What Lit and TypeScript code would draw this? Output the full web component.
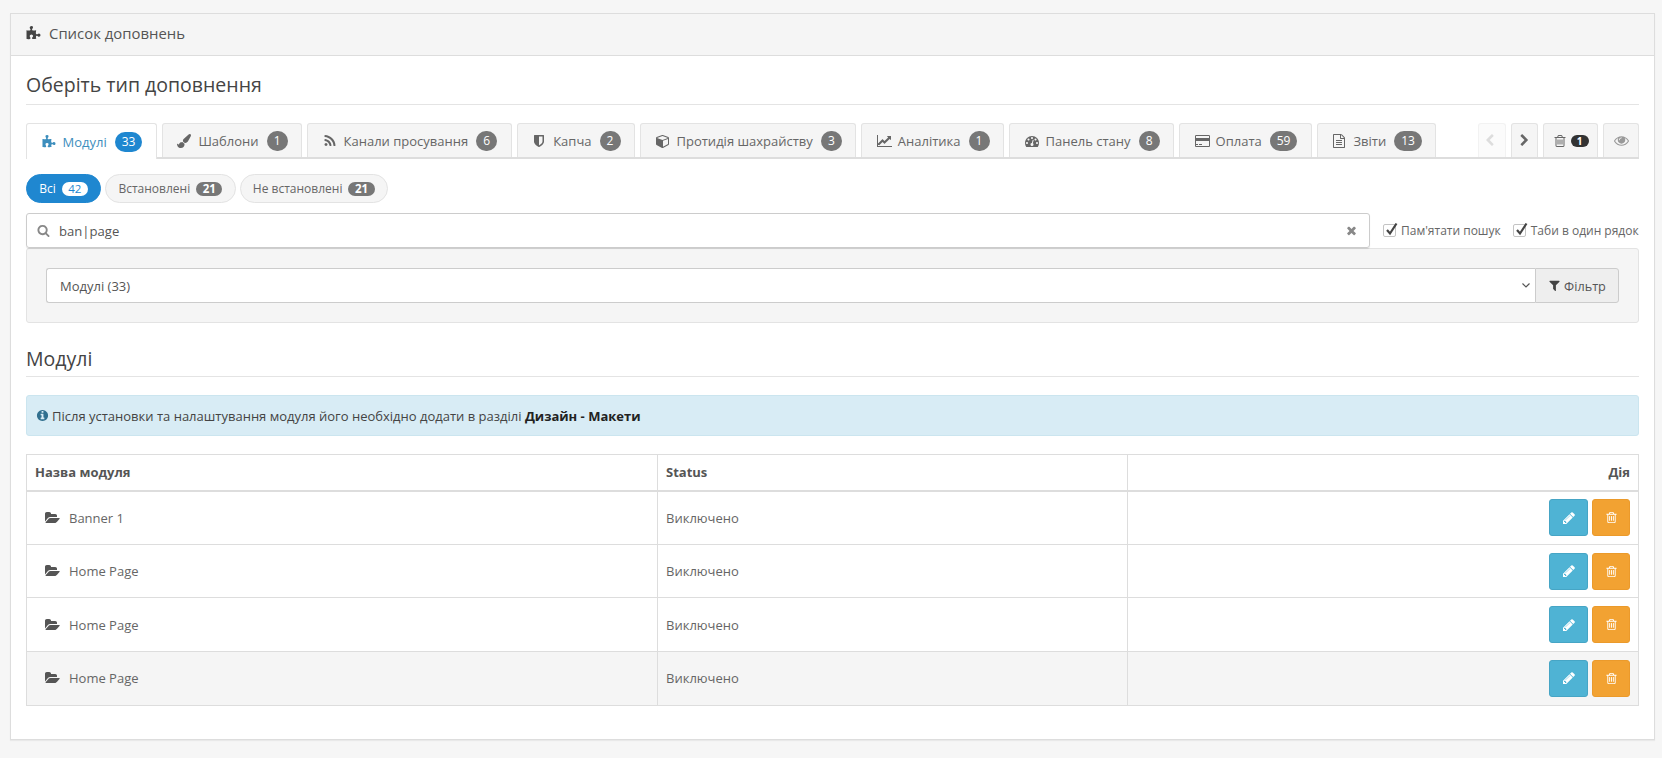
import { LitElement, css, html, svg } from "lit";
import { customElement } from "lit/decorators.js";

type IconDef = [number, string];

const ICONS: Record<string, IconDef> = {
  puzzle: [1792, "M1728 1098q0 81-44.500 135t-123.500 54q-41 0-77.500-17.500t-59-38-56.500-38-71-17.500q-110 0-110 124 0 39 16 115t15 115v5q-22 0-33 1-34 3-97.500 11.500t-115.500 13.500-98 5q-61 0-103-26.500t-42-83.500q0-37 17.500-71t38-56.500 38-59 17.500-77.500q0-79-54-123.500t-135-44.500q-84 0-143 45.500t-59 127.500q0 43 15 83t33.500 64.500 33.500 53 15 50.500q0 45-46 89-37 35-117 35-95 0-245-24-9-2-27.500-4t-27.500-4l-13-2q-3-1-6-1-2 0-2-1v-1024q2 1 17.500 3.500t34 5 21.500 3.500q150 24 245 24 80 0 117-35 46-44 46-89 0-22-15-50.500t-33.500-53-33.500-64.500-15-83q0-82 59-127.500t144-45.500q80 0 134 44.500t54 123.500q0 41-17.500 77.500t-38 59-38 56.500-17.500 71q0 57 42 83.500t103 26.500q64 0 180-15t163-17v2q-1 2-3.500 17.500t-5 34-3.500 21.500q-24 150-24 245 0 80 35 117 44 46 89 46 22 0 50.500-15t53-33.500 64.500-33.500 83-15q82 0 127.500 59t45.500 143z"],
  brush: [1792, "M1615 0q70 0 122.500 46.500t52.500 116.500q0 63-45 151-332 629-465 752-97 91-218 91-126 0-216.500-92.500t-90.500-219.500q0-128 92-212l638-579q59-54 130-54zm-909 1034q39 76 106.500 130t150.500 76l1 71q4 213-129.500 347t-348.500 134q-123 0-218-46.500t-152.500-127.500-86.500-183-29-220q7 5 41 30t62 44.500 59 36.500 46 17q41 0 55-37 25-66 57.500-112.500t69.500-76 88-47.500 103-25.500 125-10.500z"],
  rss: [1792, "M576 1344q0 80-56 136t-136 56-136-56-56-136 56-136 136-56 136 56 56 136zm512 123q2 28-17 48-18 21-47 21h-135q-25 0-43-16.500t-20-41.500q-22-229-184.500-391.500t-391.500-184.500q-25-2-41.500-20t-16.500-43v-135q0-29 21-47 17-17 43-17h5q160 13 306 80.500t259 181.500q114 113 181.500 259t80.500 306zm512 2q2 27-18 47-18 20-46 20h-143q-26 0-44.500-17.500t-19.500-42.500q-12-215-101-408.500t-231.500-336-336-231.500-408.500-102q-25-1-42.500-19.500t-17.500-43.500v-143q0-28 20-46 18-18 44-18h3q262 13 501.500 120t425.500 294q187 186 294 425.500t120 501.500z"],
  shield: [1792, "M1344 960v-640h-448v1137q119-63 213-137 235-184 235-360zm192-768v768q0 86-33.500 170.500t-83 150-118 127.500-126.500 103-121 77.500-89.500 49.500-42.500 20q-12 6-26 6t-26-6q-16-7-42.500-20t-89.500-49.500-121-77.500-126.500-103-118-127.500-83-150-33.500-170.500v-768q0-26 19-45t45-19h1152q26 0 45 19t19 45z"],
  cube: [1792, "M896 1629l640-349v-636l-640 233v752zm-64-865l698-254-698-254-698 254zm832-252v768q0 35-18 65t-49 47l-704 384q-28 16-61 16t-61-16l-704-384q-31-17-49-47t-18-65v-768q0-40 23-73t61-47l704-256q22-8 44-8t44 8l704 256q38 14 61 47t23 73z"],
  chart: [2048, "M1920 1536v128h-1920v-1536h128v1408h1792zm-128-1248v435q0 21-19.500 29.500t-35.500-7.500l-121-121-633 633q-10 10-23 10t-23-10l-233-233-416 416-192-192 585-585q10-10 23-10t23 10l233 233 464-464-121-121q-16-16-7.500-35.500t29.500-19.500h435q14 0 23 9t9 23z"],
  gauge: [1792, "M384 1152q0-53-37.500-90.500t-90.500-37.500-90.500 37.500-37.500 90.500 37.500 90.500 90.500 37.500 90.500-37.500 37.500-90.500zm192-448q0-53-37.500-90.500t-90.500-37.500-90.500 37.500-37.500 90.500 37.500 90.500 90.500 37.500 90.500-37.500 37.500-90.500zm428 481l101-382q6-26-7.500-48.500t-38.500-29.500-48 6.500-30 39.500l-101 382q-60 5-107 43.500t-63 98.500q-20 77 20 146t117 89 146-20 89-117q16-60-6-117t-72-91zm660-33q0-53-37.500-90.500t-90.500-37.500-90.500 37.500-37.500 90.500 37.500 90.500 90.500 37.500 90.500-37.500 37.500-90.500zm-640-640q0-53-37.500-90.500t-90.500-37.500-90.500 37.500-37.500 90.500 37.500 90.500 90.500 37.500 90.500-37.500 37.500-90.500zm448 192q0-53-37.500-90.500t-90.500-37.500-90.500 37.500-37.500 90.500 37.500 90.500 90.500 37.500 90.500-37.500 37.500-90.500zm320 448q0 261-141 483-19 29-54 29h-1402q-35 0-54-29-141-221-141-483 0-182 71-348t191-286 286-191 348-71 348 71 286 191 191 286 71 348z"],
  card: [1920, "M1760 128q66 0 113 47t47 113v1216q0 66-47 113t-113 47h-1600q-66 0-113-47t-47-113v-1216q0-66 47-113t113-47h1600zm-1600 128q-13 0-22.500 9.500t-9.500 22.500v224h1664v-224q0-13-9.500-22.500t-22.500-9.500h-1600zm1600 1280q13 0 22.500-9.500t9.500-22.500v-608h-1664v608q0 13 9.500 22.500t22.500 9.500h1600zm-1632-128v-128h256v128h-256zm384 0v-128h384v128h-384z"],
  file: [1792, "M1596 380q28 28 48 76t20 88v1152q0 40-28 68t-68 28h-1344q-40 0-68-28t-28-68v-1600q0-40 28-68t68-28h896q40 0 88 20t76 48zm-444-244v376h376q-10-29-22-41l-313-313q-12-12-41-22zm384 1528v-1024h-416q-40 0-68-28t-28-68v-416h-768v1536h1280zm-1024-864q0-14 9-23t23-9h704q14 0 23 9t9 23v64q0 14-9 23t-23 9h-704q-14 0-23-9t-9-23v-64zm736 224q14 0 23 9t9 23v64q0 14-9 23t-23 9h-704q-14 0-23-9t-9-23v-64q0-14 9-23t23-9h704zm0 256q14 0 23 9t9 23v64q0 14-9 23t-23 9h-704q-14 0-23-9t-9-23v-64q0-14 9-23t23-9h704z"],
  eye: [1792, "M1664 960q-152-236-381-353 61 104 61 225 0 185-131.500 316.500t-316.500 131.500-316.500-131.500-131.500-316.500q0-121 61-225-229 117-381 353 133 205 333.500 326.500t434.500 121.500 434.500-121.500 333.500-326.500zm-720-384q0-20-14-34t-34-14q-125 0-214.500 89.500t-89.500 214.500q0 20 14 34t34 14 34-14 14-34q0-86 61-147t147-61q20 0 34-14t14-34zm848 384q0 34-20 69-140 230-376.500 368.500t-499.500 138.500-499.500-139-376.500-368q-20-35-20-69t20-69q140-229 376.500-368t499.500-139 499.500 139 376.500 368q20 35 20 69z"],
  trash: [1792, "M704 736v576q0 14-9 23t-23 9h-64q-14 0-23-9t-9-23v-576q0-14 9-23t23-9h64q14 0 23 9t9 23zm256 0v576q0 14-9 23t-23 9h-64q-14 0-23-9t-9-23v-576q0-14 9-23t23-9h64q14 0 23 9t9 23zm256 0v576q0 14-9 23t-23 9h-64q-14 0-23-9t-9-23v-576q0-14 9-23t23-9h64q14 0 23 9t9 23zm128 724v-948h-896v948q0 22 7 40.500t14.500 27 10.500 8.500h832q3 0 10.500-8.500t14.500-27 7-40.500zm-672-1076h448l-48-117q-7-9-17-11h-317q-10 2-17 11zm928 32v64q0 14-9 23t-23 9h-96v948q0 83-47 143.500t-113 60.500h-832q-66 0-113-58.500t-47-141.500v-952h-96q-14 0-23-9t-9-23v-64q0-14 9-23t23-9h309l70-167q15-37 54-63t79-26h320q40 0 79 26t54 63l70 167h309q14 0 23 9t9 23z"],
  pencil: [1792, "M491 1536l91-91-235-235-91 91v107h128v128h107zm523-928q0-22-22-22-10 0-17 7l-542 542q-7 7-7 17 0 22 22 22 10 0 17-7l542-542q7-7 7-17zm-54-192l416 416-832 832h-416v-416zm683 96q0 53-37 90l-166 166-416-416 166-165q36-38 90-38 53 0 91 38l235 234q37 39 37 91z"],
  folder: [1920, "M1879 952q0 31-31 66l-336 396q-43 51-120.500 86.500t-143.500 35.500h-1088q-34 0-60.500-13t-26.500-43q0-31 31-66l336-396q43-51 120.500-86.500t143.500-35.500h1088q34 0 60.500 13t26.500 43zm-343-344v160h-832q-94 0-197 47.500t-164 119.500l-337 396-5 6q0-4-.5-12.500t-.5-12.500v-960q0-92 66-158t158-66h320q92 0 158 66t66 158v32h544q92 0 158 66t66 158z"],
  filter: [1792, "M1595 295q17 41-14 70l-493 493v742q0 42-39 59-13 5-25 5-27 0-45-19l-256-256q-19-19-19-45v-486l-493-493q-31-29-14-70 17-39 59-39h1280q42 0 59 39z"],
  info: [1792, "M1152 1376v-160q0-14-9-23t-23-9h-96v-512q0-14-9-23t-23-9h-320q-14 0-23 9t-9 23v160q0 14 9 23t23 9h96v320h-96q-14 0-23 9t-9 23v160q0 14 9 23t23 9h448q14 0 23-9t9-23zm-128-896v-160q0-14-9-23t-23-9h-192q-14 0-23 9t-9 23v160q0 14 9 23t23 9h192q14 0 23-9t9-23zm640 416q0 209-103 385.500t-279.500 279.500-385.500 103-385.500-103-279.500-279.500-103-385.500 103-385.500 279.500-279.500 385.500-103 385.500 103 279.500 279.500 103 385.500z"],
  search: [1792, "M1216 832q0-185-131.500-316.500t-316.500-131.500-316.500 131.500-131.500 316.500 131.500 316.500 316.500 131.500 316.500-131.500 131.500-316.500zm512 832q0 52-38 90t-90 38q-54 0-90-38l-343-342q-179 124-399 124-143 0-273.500-55.500t-225-150-150-225-55.500-273.500 55.500-273.500 150-225 225-150 273.500-55.500 273.500 55.500 225 150 150 225 55.500 273.500q0 220-124 399l343 343q37 37 37 90z"],
  times: [1792, "M1490 1322q0 40-28 68l-136 136q-28 28-68 28t-68-28l-294-294-294 294q-28 28-68 28t-68-28l-136-136q-28-28-28-68t28-68l294-294-294-294q-28-28-28-68t28-68l136-136q28-28 68-28t68 28l294 294 294-294q28-28 68-28t68 28l136 136q28 28 28 68t-28 68l-294 294 294 294q28 28 28 68z"],
  left: [1792, "M1171 301l-531 531 531 531q19 19 19 45t-19 45l-166 166q-19 19-45 19t-45-19l-742-742q-19-19-19-45t19-45l742-742q19-19 45-19t45 19l166 166q19 19 19 45t-19 45z"],
  right: [1792, "M1363 877l-742 742q-19 19-45 19t-45-19l-166-166q-19-19-19-45t19-45l531-531-531-531q-19-19-19-45t19-45l166-166q19-19 45-19t45 19l742 742q19 19 19 45t-19 45z"],
};

function icon(name: string, size = 14) {
  const [w, d] = ICONS[name];
  return html`<svg class="ic" width=${(size * w) / 1792} height=${size} viewBox="0 0 ${w} 1792" fill="currentColor">${svg`<path d=${d}></path>`}</svg>`;
}

const TABS = [
  { icon: "puzzle", label: "Модулі", count: 33, active: true },
  { icon: "brush", label: "Шаблони", count: 1 },
  { icon: "rss", label: "Канали просування", count: 6 },
  { icon: "shield", label: "Капча", count: 2 },
  { icon: "cube", label: "Протидія шахрайству", count: 3 },
  { icon: "chart", label: "Аналітика", count: 1 },
  { icon: "gauge", label: "Панель стану", count: 8 },
  { icon: "card", label: "Оплата", count: 59 },
  { icon: "file", label: "Звіти", count: 13 },
];

const PILLS = [
  { label: "Всі", count: 42, active: true },
  { label: "Встановлені", count: 21 },
  { label: "Не встановлені", count: 21 },
];

const ROWS = ["Banner 1", "Home Page", "Home Page", "Home Page"];

@customElement("app-root")
export class AppRoot extends LitElement {
  static styles = css`
    :host {
      display: block;
      min-height: 758px;
      background: #f6f6f6;
      font-family: "Open Sans", sans-serif;
      font-size: 13px;
      color: #666;
      overflow: hidden;
    }

    * {
      box-sizing: border-box;
    }

    .ic {
      display: block;
      flex: none;
    }

    .panel {
      margin: 13px 7px 0 10px;
      height: 727px;
      background: #fff;
      border: 1px solid #ddd;
      box-shadow: 0 1px 1px rgba(0, 0, 0, 0.05);
    }

    .panel-head {
      display: flex;
      align-items: center;
      gap: 8px;
      height: 42px;
      padding: 0 15px 3px;
      background: #f5f5f5;
      border-bottom: 1px solid #ddd;
      font-size: 14.9px;
      color: #555;
    }

    .panel-head .ic {
      color: #444;
    }

    .panel-body {
      padding: 0 15px;
    }

    h2 {
      margin: 0;
      font-weight: 400;
      font-size: 19.5px;
      line-height: 27px;
      color: #444;
      border-bottom: 1px solid #e4e4e4;
    }

    .title-top {
      padding: 15px 0 6px;
    }

    .tabs {
      display: flex;
      align-items: flex-start;
      gap: 5px;
      height: 36px;
      margin-top: 18px;
      border-bottom: 2px solid #ddd;
    }

    .tab {
      display: flex;
      align-items: center;
      height: 34px;
      padding: 0 13.5px 0 14.5px;
      background: #f5f5f5;
      border: 1px solid #e3e3e3;
      border-bottom: 0;
      border-radius: 3px 3px 0 0;
      font-size: 13px;
      color: #666;
      white-space: nowrap;
    }

    .tab-icon {
      display: flex;
      flex: none;
      width: 21px;
      color: #666;
    }

    .tab.active {
      height: 36px;
      background: #fff;
      color: #3d8ebd;
    }

    .tab.active .tab-icon {
      color: #3d8ebd;
    }

    .count {
      margin-left: 8px;
      min-width: 21px;
      height: 20px;
      padding: 0 7px;
      border-radius: 10px;
      background: #777;
      color: #fff;
      font-size: 12px;
      line-height: 20px;
      text-align: center;
    }

    .tab.active .count {
      background: #1f87d0;
    }

    .tools {
      display: flex;
      gap: 5px;
      margin-left: auto;
    }

    .tool {
      display: flex;
      align-items: center;
      justify-content: center;
      gap: 4px;
      width: 27.5px;
      height: 34px;
      background: #f5f5f5;
      border: 1px solid #e3e3e3;
      border-bottom: 0;
      border-radius: 3px 3px 0 0;
      color: #666;
    }

    .tool.off {
      background: #fbfbfb;
      color: #ddd;
      border-color: #f2f2f2;
    }

    .tool.trash {
      width: 55px;
    }

    .tool.eye {
      width: 36px;
      color: #999;
    }

    .mini-count {
      width: 18px;
      height: 12px;
      border-radius: 6px;
      background: #333;
      color: #fff;
      font-size: 10px;
      font-weight: 700;
      line-height: 12px;
      text-align: center;
    }

    .pills {
      display: flex;
      gap: 4px;
      margin-top: 15px;
    }

    .pill {
      display: flex;
      align-items: center;
      height: 29px;
      padding: 0 12.25px;
      border: 1px solid #e3e3e3;
      border-radius: 15px;
      background: #f5f5f5;
      font-size: 12px;
      color: #666;
    }

    .pill.active {
      background: #1f87d0;
      border-color: #1f87d0;
      color: #fff;
    }

    .pill .num {
      margin-left: 6px;
      height: 14px;
      padding: 0 6.5px;
      border-radius: 7px;
      background: #777;
      color: #fff;
      font-size: 11.5px;
      font-weight: 700;
      line-height: 14px;
    }

    .pill.active .num {
      background: #fff;
      color: #1f87d0;
      font-weight: 400;
    }

    .search-row {
      display: flex;
      align-items: center;
      margin-top: 10px;
    }

    .search {
      display: flex;
      flex: none;
      align-items: center;
      width: 1344px;
      height: 35px;
      padding: 0 11px 0 10px;
      border: 1px solid #ccc;
      border-radius: 3px;
      box-shadow: 0 1px 1px rgba(0, 0, 0, 0.1);
      color: #888;
    }

    .search input {
      flex: 1;
      margin-left: 9px;
      border: 0;
      outline: 0;
      padding: 0;
      font: inherit;
      font-size: 13.1px;
      color: #555;
    }

    .check {
      display: flex;
      flex: none;
      align-items: center;
      gap: 4px;
      margin-left: 13px;
      font-size: 12px;
      color: #666;
      white-space: nowrap;
    }

    .check + .check {
      margin-left: 12px;
    }

    .box {
      position: relative;
      width: 13px;
      height: 13px;
      border: 1px solid #c4c4c4;
      border-radius: 2px;
      background: #fff;
      margin-right: 1px;
    }

    .box svg {
      position: absolute;
      left: 0;
      top: -3px;
    }

    .well {
      display: flex;
      height: 75px;
      padding: 19px 19px 0;
      background: #f5f5f5;
      border: 1px solid #e3e3e3;
      border-radius: 3px;
    }

    .select-wrap {
      position: relative;
      flex: 1;
    }

    .select-wrap svg {
      position: absolute;
      right: 5px;
      top: 15px;
    }

    select {
      display: block;
      appearance: none;
      width: 100%;
      height: 35px;
      padding: 0 13px;
      border: 1px solid #ccc;
      border-right: 0;
      border-radius: 3px 0 0 3px;
      background: #fff;
      font: inherit;
      font-size: 13px;
      color: #555;
      outline: 0;
    }

    .filter {
      display: flex;
      align-items: center;
      justify-content: center;
      gap: 3px;
      width: 84px;
      height: 35px;
      border: 1px solid #ccc;
      border-radius: 0 3px 3px 0;
      background: #eee;
      font-size: 12.7px;
      color: #555;
    }

    .filter .ic {
      color: #444;
    }

    .title-mod {
      margin-top: 22px;
      padding-bottom: 4px;
    }

    .alert {
      display: flex;
      align-items: center;
      gap: 3px;
      height: 41px;
      margin-top: 18px;
      padding: 0 9px;
      background: #d8ecf5;
      border: 1px solid #cbe5ef;
      border-radius: 3px;
      font-size: 13px;
      color: #444;
      white-space: pre;
    }

    .alert .ic {
      color: #31708f;
    }

    .alert b {
      color: #222;
    }

    table {
      width: 100%;
      margin-top: 18px;
      border-collapse: collapse;
      table-layout: fixed;
      font-size: 13px;
      color: #666;
    }

    .c1 {
      width: 631px;
    }

    .c2 {
      width: 470px;
    }

    th,
    td {
      border: 1px solid #ddd;
      padding: 0 8px;
      text-align: left;
    }

    th {
      height: 36px;
      border-bottom-width: 2px;
      color: #555;
      font-size: 13px;
    }

    td {
      height: 53.7px;
    }

    .right {
      text-align: right;
    }

    .name {
      display: flex;
      align-items: center;
      gap: 9px;
      padding-left: 10px;
    }

    .name .ic {
      color: #555;
    }

    .actions {
      display: flex;
      justify-content: flex-end;
      gap: 4px;
    }

    .btn {
      display: flex;
      align-items: center;
      justify-content: center;
      width: 39px;
      height: 37px;
      border-radius: 3px;
      color: #fff;
    }

    .btn.edit {
      background: #4fb3d4;
      border: 1px solid #46a5c5;
    }

    .btn.del {
      width: 38px;
      background: #f2a232;
      border: 1px solid #eb9a2b;
    }

    tr.hl td {
      background: #f5f5f5;
    }
  `;

  private renderCheck(label: string) {
    return html`<label class="check">
      <span class="box">
        <svg width="14" height="14" viewBox="0 0 14 14">
          <path d="M3 8l3 3.500 6.500-10" fill="none" stroke="#444" stroke-width="2.2"></path>
        </svg>
      </span>
      ${label}
    </label>`;
  }

  render() {
    return html`
      <div class="panel">
        <div class="panel-head">${icon("puzzle", 15)}<span>Список доповнень</span></div>
        <div class="panel-body">
          <h2 class="title-top">Оберіть тип доповнення</h2>

          <div class="tabs">
            ${TABS.map(
              (t) => html`<div class="tab ${t.active ? "active" : ""}">
                <span class="tab-icon">${icon(t.icon)}</span><span>${t.label}</span><span class="count">${t.count}</span>
              </div>`
            )}
            <div class="tools">
              <div class="tool off">${icon("left", 13)}</div>
              <div class="tool">${icon("right", 13)}</div>
              <div class="tool trash">${icon("trash", 14)}<span class="mini-count">1</span></div>
              <div class="tool eye">${icon("eye", 15)}</div>
            </div>
          </div>

          <div class="pills">
            ${PILLS.map(
              (p) => html`<div class="pill ${p.active ? "active" : ""}">
                <span>${p.label}</span><span class="num">${p.count}</span>
              </div>`
            )}
          </div>

          <div class="search-row">
            <div class="search">
              ${icon("search", 13)}
              <input .value=${"ban|page"} />
              ${icon("times", 13)}
            </div>
            ${this.renderCheck("Пам'ятати пошук")} ${this.renderCheck("Таби в один рядок")}
          </div>

          <div class="well">
            <div class="select-wrap">
              <select><option>Модулі (33)</option></select>
              <svg width="8" height="5" viewBox="0 0 8 5">
                <path d="M.5.500l3.500 3.500 3.500-3.500" fill="none" stroke="#555" stroke-width="1.200"></path>
              </svg>
            </div>
            <div class="filter">${icon("filter", 13)}<span>Фільтр</span></div>
          </div>

          <h2 class="title-mod">Модулі</h2>

          <div class="alert">${icon("info", 13)}<span>Після установки та налаштування модуля його необхідно додати в разділі <b>Дизайн - Макети</b></span></div>

          <table>
            <colgroup><col class="c1" /><col class="c2" /><col /></colgroup>
            <thead>
              <tr>
                <th>Назва модуля</th>
                <th>Status</th>
                <th class="right">Дія</th>
              </tr>
            </thead>
            <tbody>
              ${ROWS.map(
                (name, i) => html`<tr class=${i === 3 ? "hl" : ""}>
                  <td><div class="name">${icon("folder", 14)}<span>${name}</span></div></td>
                  <td>Виключено</td>
                  <td>
                    <div class="actions">
                      <div class="btn edit">${icon("pencil", 14)}</div>
                      <div class="btn del">${icon("trash", 13)}</div>
                    </div>
                  </td>
                </tr>`
              )}
            </tbody>
          </table>
        </div>
      </div>
    `;
  }
}
